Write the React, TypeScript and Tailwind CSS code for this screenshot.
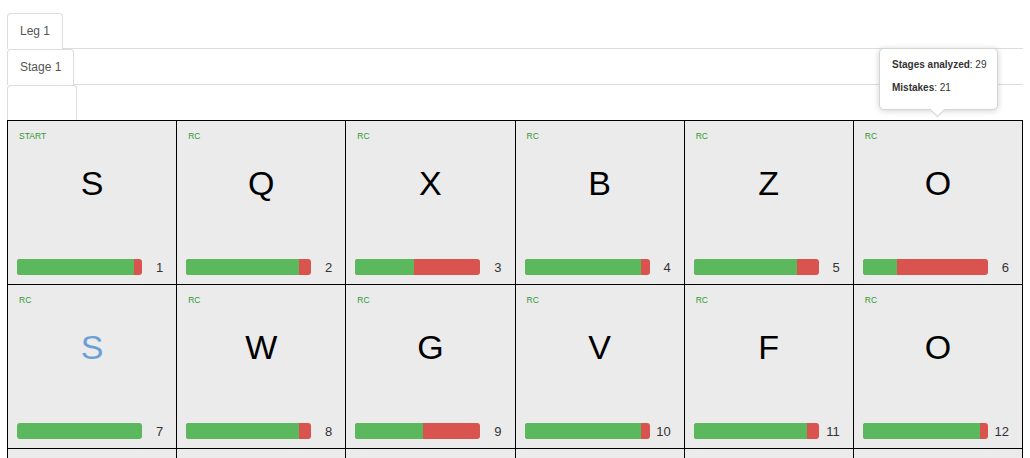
import React from "react";

interface Control {
  label: string;
  letter: string;
  ok: number;
  highlight?: boolean;
}

const controls: Control[] = [
  { label: "START", letter: "S", ok: 93.6 },
  { label: "RC", letter: "Q", ok: 90 },
  { label: "RC", letter: "X", ok: 47 },
  { label: "RC", letter: "B", ok: 93 },
  { label: "RC", letter: "Z", ok: 83 },
  { label: "RC", letter: "O", ok: 27.6 },
  { label: "RC", letter: "S", ok: 100, highlight: true },
  { label: "RC", letter: "W", ok: 90 },
  { label: "RC", letter: "G", ok: 54.5 },
  { label: "RC", letter: "V", ok: 93 },
  { label: "RC", letter: "F", ok: 90.5 },
  { label: "RC", letter: "O", ok: 94 },
];

function Tab({ children }: { children?: React.ReactNode }) {
  return (
    <div className="-mb-px h-[36px] whitespace-nowrap rounded-t-[4px] border border-b-0 border-[#ddd] bg-white px-[12px] text-[12px] leading-[35px] text-[#555]">
      {children}
    </div>
  );
}

function ControlCell({ c, index }: { c: Control; index: number }) {
  return (
    <div className="flex h-[164px] flex-col border-r border-b border-black bg-[#ebebeb]">
      <div className="pl-[11px] pt-[11px] text-[8.5px] leading-none text-[#2f9a2f]">{c.label}</div>
      <div
        className={`mt-[25px] text-center text-[34px] leading-none ${
          c.highlight ? "text-[#6c9fd6]" : "text-black"
        }`}
      >
        {c.letter}
      </div>
      <div className="mt-auto flex items-center pb-[9px] pl-[9px] pr-[13px]">
        <div className="flex h-[16px] w-[125px] overflow-hidden rounded-[3px] bg-[#d9534f]">
          <div className="h-full bg-[#5cb85c]" style={{ width: `${c.ok}%` }} />
        </div>
        <div className="flex-1 text-right text-[13px] leading-none text-[#333]">{index + 1}</div>
      </div>
    </div>
  );
}

export default function App() {
  return (
    <div className="relative h-[458px] overflow-hidden bg-white px-[7px] font-['Liberation_Sans',Arial,sans-serif]">
      <div className="flex border-b border-[#ddd] pt-[13px]">
        <Tab>Leg 1</Tab>
      </div>
      <div className="flex border-b border-[#ddd]">
        <Tab>Stage 1</Tab>
      </div>
      <div className="flex h-[35px]">
        <div className="h-[35px] w-[70px] rounded-t-[4px] border border-b-0 border-[#ddd] bg-white" />
      </div>

      <div className="grid grid-cols-6 border-t border-l border-black">
        {controls.map((c, i) => (
          <ControlCell key={i} c={c} index={i} />
        ))}
        {/* next row, only its top edge is in view */}
        {[0, 1, 2, 3, 4, 5].map((i) => (
          <div key={`n${i}`} className="h-[164px] border-r border-b border-black bg-[#ebebeb]" />
        ))}
      </div>

      {/* tooltip over control 6 */}
      <div className="absolute left-[879px] top-[48px] h-[62px] w-[119px] rounded-[5px] border border-[#d4d4d4] bg-white shadow-[0_1px_6px_rgba(0,0,0,0.18)]">
        <div className="absolute bottom-[-6px] left-[52px] h-[11px] w-[11px] rotate-45 border-r border-b border-[#d4d4d4] bg-white" />
        <div className="relative whitespace-nowrap px-[12px] pt-[9px] text-[10px] leading-[13px] text-[#333]">
          <p>
            <span className="font-bold">Stages analyzed</span>: 29
          </p>
          <p className="mt-[10px]">
            <span className="font-bold">Mistakes</span>: 21
          </p>
        </div>
      </div>
    </div>
  );
}
